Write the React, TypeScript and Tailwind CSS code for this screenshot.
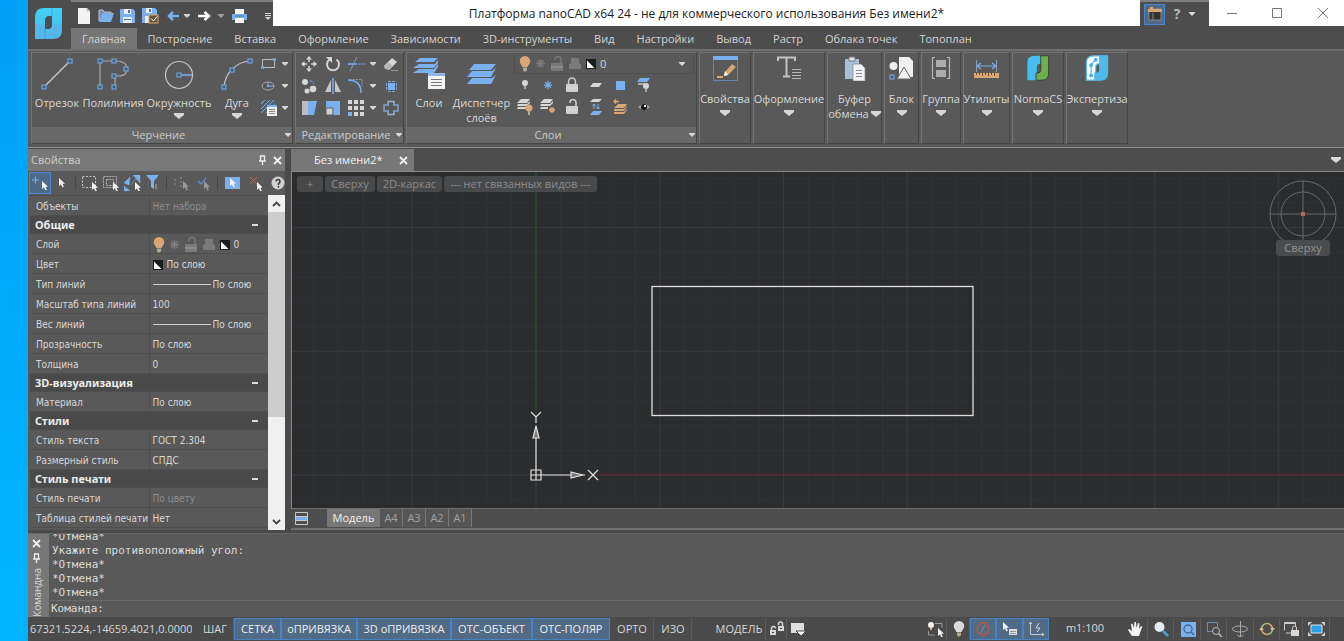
import React from "react";
import type { ReactNode } from "react";
import clsx from "clsx";

const BLUE = "#78b0f0";
const TAN = "#d9a676";
const LIGHT = "#d6d6d6";

type IconProps = { w?: number; h?: number; className?: string; children: ReactNode };

function Icon({ w = 16, h = 16, className, children }: IconProps) {
  return (
    <svg width={w} height={h} viewBox={`0 0 ${w} ${h}`} fill="none" className={clsx("shrink-0", className)} aria-hidden="true">
      {children}
    </svg>
  );
}

function Arrow({ big = false }: { big?: boolean }) {
  return big ? (
    <Icon w={10} h={6}><path d="M0 0h10v2L5 6 0 2z" fill={LIGHT} /></Icon>
  ) : (
    <Icon w={6} h={4}><path d="M0 0h6v1L3 4 0 1z" fill={LIGHT} /></Icon>
  );
}

function Node({ x, y }: { x: number; y: number }) {
  return <rect x={x - 2} y={y - 2} width="4" height="4" fill="#4b5a6b" stroke="#6ba3e0" strokeWidth="1.2" />;
}

function Cursor({ x, y, fill = "#f4f4f4" }: { x: number; y: number; fill?: string }) {
  return <path transform={`translate(${x} ${y})`} d="M0 0v8l2-1.8L3.4 9.4l1.4-.7L3.5 5.7H6z" fill={fill} />;
}

function Bulb({ fill = TAN }: { fill?: string }) {
  return (
    <Icon w={12} h={16}>
      <path d="M6 0a5.3 5.3 0 0 1 5.3 5.3C11.3 7.5 9 9 8.7 11H3.3C3 9 .7 7.5.7 5.3A5.3 5.3 0 0 1 6 0z" fill={fill} />
      <path d="M4 11.5h4v2.5L7 15.5H5L4 14z" fill="#b9a890" />
    </Icon>
  );
}

function Snow({ color, size = 12 }: { color: string; size?: number }) {
  return (
    <svg width={size} height={size} viewBox="0 0 12 12" aria-hidden="true" className="shrink-0">
      <path d="M6 1v10M1 6h10M2.5 2.5l7 7M9.5 2.5l-7 7" stroke={color} strokeWidth="1.5" />
    </svg>
  );
}

function Lock({ open = false, color = "#cfcfcf" }: { open?: boolean; color?: string }) {
  return (
    <Icon w={14} h={16}>
      <path d={open ? "M5 4V3.5a3 3 0 0 1 6 0V7" : "M3.5 7V4.5a3.5 3.5 0 0 1 7 0V7"} stroke={color} strokeWidth="1.5" />
      <rect x="1" y="7" width="12" height="8" rx="1" fill={color} />
      <path d="M1 11h12" stroke="#fff" strokeOpacity=".25" />
    </Icon>
  );
}

function PrinterDim() {
  return (
    <Icon w={14} h={14}>
      <path d="M3 6V1h8v5l2 1v5H1V7z" fill="#7a7a7a" />
    </Icon>
  );
}

function Swatch() {
  return (
    <Icon w={10} h={10}>
      <rect width="10" height="10" fill="#1b1b1b" />
      <path d="M1 1.5v7.5h7.5z" fill="#fff" />
    </Icon>
  );
}

function LayerState() {
  return (
    <>
      <Bulb />
      <Snow color="#7d7d7d" size={11} />
      <Lock open color="#7a7a7a" />
      <PrinterDim />
      <Swatch />
    </>
  );
}

/* ---------- title bar ---------- */

function QuickAccess() {
  return (
    <div className="flex w-[202px] items-center border-t-2 border-[#7d8080] bg-[#4d4d4d] pt-1 pl-1.5">
      <button aria-label="Создать" className="w-[21px]">
        <Icon w={14}><path d="M1 0h9l3 3v13H1z" fill="#f3f3f3" /><path d="M10 0v3h3" stroke="#aaa" /></Icon>
      </button>
      <button aria-label="Открыть" className="w-[22px]">
        <Icon><path d="M1 13V2h4l1 2h7v2" stroke="#b5c6d8" fill="#7d8fa5" /><path d="M4 5h12l-3 9H1z" fill={BLUE} /></Icon>
      </button>
      <button aria-label="Сохранить" className="w-[22px]">
        <Icon w={15}><path d="M0 1h13l2 2v12H0z" fill={BLUE} /><path d="M4 1h7v5H4zM3 9h9v6H3z" fill="#e9eef5" /><path d="M8 2h2v3H8zM4 11h7v1H4z" fill="#56748f" /></Icon>
      </button>
      <button aria-label="Сохранить как" className="w-[25px]">
        <Icon w={17}><path d="M0 0h13l2 2v13H0z" fill={BLUE} /><path d="M4 0h6v5H4zM3 8h8v7H3z" fill="#e9eef5" /><path d="M7 1h2v3H7z" fill="#56748f" /><rect x="7" y="7" width="9" height="8" fill="#6b5138" stroke={TAN} /><path d="M9 10.5l2.5 2.5L15 8.5" stroke="#fff" /></Icon>
      </button>
      <button aria-label="Отменить" className="w-[17px]">
        <Icon w={13} h={10}><path d="M12 5H2M6 1L2 5l4 4" stroke={BLUE} strokeWidth="2.5" /></Icon>
      </button>
      <button aria-label="История отмен" className="w-[14px]"><Arrow /></button>
      <button aria-label="Повторить" className="w-[20px]">
        <Icon w={13} h={10}><path d="M0 5h10M6.5 1L11 5 6.5 9" stroke="#fff" strokeWidth="2.5" /></Icon>
      </button>
      <button aria-label="История повторов" className="w-[13px] opacity-60"><Arrow /></button>
      <button aria-label="Печать" className="w-[34px]">
        <Icon w={17}><path d="M4 1h9v5H4z" fill="#f5f5f5" /><path d="M1 6h15v6H1z" fill={BLUE} /><path d="M4 10h9v5H4z" fill="#f5f5f5" /><path d="M4 8h9" stroke="#3f6fa8" /></Icon>
      </button>
      <button aria-label="Настройка панели">
        <Icon w={6} h={7}><path d="M0 .5h6M0 2.5h6" stroke={LIGHT} /><path d="M0 4h6L3 7z" fill={LIGHT} /></Icon>
      </button>
    </div>
  );
}

const tabs = ["Главная", "Построение", "Вставка", "Оформление", "Зависимости", "3D-инструменты", "Вид", "Настройки", "Вывод", "Растр", "Облака точек", "Топоплан"];

function Header() {
  return (
    <header className="flex h-[49px] shrink-0 bg-[#4d4d4d]">
      <div className="w-[43px] pt-2 pl-[7px]">
        <svg width="27" height="31" viewBox="0 0 27 31" aria-hidden="true">
          <defs>
            <linearGradient id="brand" x1="0" y1="0" x2="0" y2="1">
              <stop offset="0" stopColor="#45d0f7" /><stop offset=".5" stopColor="#43c6f2" /><stop offset=".52" stopColor="#52b8ea" /><stop offset="1" stopColor="#52b8ea" />
            </linearGradient>
          </defs>
          <path d="M0 30V9Q0 0 9 0H27V22Q27 31 18 31H0ZM17 8H14Q10 8 10 13V21H13Q17 21 17 17Z" fill="url(#brand)" fillRule="evenodd" />
          <path d="M10 20V31M17 9V0" stroke="#3a8fc0" strokeWidth=".7" />
        </svg>
      </div>
      <div className="flex min-w-0 flex-1 flex-col">
        <div className="flex h-[26px]">
          <QuickAccess />
          <h1 className="flex flex-1 items-center justify-center bg-white pt-0.5 text-[12px] text-[#1c1c1c]">
            Платформа nanoCAD x64 24 - не для коммерческого использования Без имени2*
          </h1>
          <div className="flex w-[69px] items-center border-t-2 border-[#7d8080] bg-[#4d4d4d] pl-1">
            <button aria-label="Интерфейс" className="flex h-[21px] w-[21px] items-center justify-center border border-[#4a87cc] bg-[#4f6a88]">
              <Icon w={14} h={14}><path d="M1 2h12v11H1z" fill="#333" stroke="#888" /><path d="M0 2h2V0h3v2h9v3H0z" fill={TAN} /><path d="M5 6v7" stroke="#888" /></Icon>
            </button>
            <button aria-label="Справка" className="w-6 text-[14px] font-bold text-[#b8b8b8]">?</button>
            <button aria-label="Меню справки"><Arrow /></button>
          </div>
          <div className="flex w-[135px] items-center bg-white pl-4">
            <button aria-label="Свернуть" className="w-[45px]"><Icon><path d="M2 8.5h10" stroke="#777" /></Icon></button>
            <button aria-label="Развернуть" className="w-[45px]"><Icon><path d="M2.5 3.5h9v9h-9z" stroke="#777" /></Icon></button>
            <button aria-label="Закрыть"><Icon><path d="M3 3l10 10M13 3L3 13" stroke="#777" /></Icon></button>
          </div>
        </div>
        <nav className="flex flex-1 pt-0.5">
          {tabs.map((tab, i) => (
            <button key={tab} className={clsx("px-[11px] whitespace-nowrap text-[#d2d2d2]", i === 0 && "bg-[#757575]")}>
              {tab}
            </button>
          ))}
        </nav>
      </div>
    </header>
  );
}

/* ---------- ribbon ---------- */

function Group({ title, className, children }: { title?: string; className: string; children: ReactNode }) {
  return (
    <section className={clsx("flex shrink-0 flex-col border border-[#454545] border-t-[#747474] border-l-[#747474]", className)}>
      <div className="flex min-h-0 flex-1">{children}</div>
      {title && (
        <div className="flex h-4 shrink-0 items-center bg-[#686868] pr-px text-[#c8c8c8]">
          <span className="flex-1 text-center">{title}</span>
          <Arrow />
        </div>
      )}
    </section>
  );
}

function BigButton({ icon, label, className, arrow }: { icon: ReactNode; label: string; className?: string; arrow?: boolean }) {
  return (
    <button className={clsx("flex flex-col items-center", className)}>
      <span className="flex h-[42px] items-center">{icon}</span>
      <span className="leading-[15px] whitespace-pre-line">{label}</span>
      {arrow && <span className="mt-[3px]"><Arrow big /></span>}
    </button>
  );
}

function DropIcon({ label, children }: { label: string; children: ReactNode }) {
  return (
    <button aria-label={label} className="flex h-[22px] items-center gap-[5px]">
      {children}
      <Arrow />
    </button>
  );
}

function DrawGroup() {
  return (
    <Group title="Черчение" className="w-[262px]">
      <BigButton className="w-[50px]" label="Отрезок" icon={
        <Icon w={32} h={32}><path d="M3 29L29 3" stroke="#c4c4c4" strokeWidth="1.5" /><Node x={3} y={29} /><Node x={29} y={3} /></Icon>
      } />
      <BigButton className="w-[62px]" label="Полилиния" icon={
        <Icon w={32} h={32}>
          <path d="M3 29V3h15c6 0 12 1 12 8s-6 7-12 7v11" stroke="#a9a9a9" strokeWidth="1.2" />
          <Node x={3} y={29} /><Node x={3} y={3} /><Node x={17} y={3} /><Node x={29} y={11} /><Node x={17} y={18} /><Node x={17} y={29} />
        </Icon>
      } />
      <BigButton className="w-[70px]" label="Окружность" arrow icon={
        <Icon w={32} h={32}><circle cx="16" cy="17" r="13.5" stroke="#c4c4c4" strokeWidth="1.2" /><path d="M16 17h13" stroke={BLUE} strokeWidth="1.5" /><Node x={16} y={17} /></Icon>
      } />
      <BigButton className="w-[46px]" label="Дуга" arrow icon={
        <Icon w={32} h={32}><path d="M3 29C4 15 15 4 29 3" stroke="#c4c4c4" strokeWidth="1.2" /><Node x={3} y={29} /><Node x={11} y={12} /><Node x={29} y={3} /></Icon>
      } />
      <div className="flex flex-col">
        <DropIcon label="Прямоугольник">
          <Icon w={17}><path d="M2.5 3.5h12v8h-12z" stroke="#bbb" /><path d="M1 10h3v3H1zM13 2h3v3h-3z" fill="#6ba3e0" /></Icon>
        </DropIcon>
        <DropIcon label="Эллипс">
          <Icon w={17}><ellipse cx="8" cy="8" rx="6" ry="4" stroke="#aaa" /><path d="M8 4v4h6" stroke={BLUE} /><path d="M7 7h2v2H7z" fill={BLUE} /></Icon>
        </DropIcon>
        <DropIcon label="Штриховка">
          <Icon w={17} h={18}>
            <path d="M1 1h14v13H1z" fill="#53606e" /><path d="M1 5l4-4M1 10l9-9M1 14L14 1M6 14l9-9" stroke="#8fa6bf" />
            <path d="M7 6h10v11H7z" fill="#efefef" /><path d="M7 6h10v2H7z" fill={BLUE} /><path d="M9 10.5h6M9 12.5h6M9 14.5h6" stroke="#888" />
          </Icon>
        </DropIcon>
      </div>
    </Group>
  );
}

const cell = "flex h-[22px] items-center justify-center";

function EditGroup() {
  return (
    <Group title="Редактирование" className="w-[109px]">
      <div className="grid h-[66px] grid-cols-[26px_22px_36px_22px]">
        <button aria-label="Перенести" className={cell}>
          <Icon><path d="M8 3v3M8 10v3M3 8h3M10 8h3" stroke={LIGHT} strokeWidth="1.5" /><path d="M8 0l3 3.5H5zM8 16l3-3.5H5zM0 8l3.5-3v6zM16 8l-3.5-3v6z" fill={LIGHT} /></Icon>
        </button>
        <button aria-label="Повернуть" className={cell}>
          <Icon><path d="M11.5 3.5a6 6 0 1 1-7 0" stroke={LIGHT} strokeWidth="2" /><path d="M1 1h6v6z" fill={LIGHT} /></Icon>
        </button>
        <DropIcon label="Обрезать">
          <Icon w={17} className="ml-1"><path d="M0 8h9" stroke={BLUE} strokeWidth="1.5" /><path d="M10 8h7" stroke={BLUE} strokeDasharray="2 1" /><path d="M2 15L9 1" stroke="#8b9cb0" /></Icon>
        </DropIcon>
        <button aria-label="Стереть" className={cell}>
          <Icon><path d="M1 10l8-8 5 4-8 8z" fill="#d9d9d9" /><path d="M1 10l4-4 5 4-4 4-4-1z" fill="#b4b4b4" /><path d="M8 14.5h7" stroke="#999" /></Icon>
        </button>
        <button aria-label="Копировать" className={cell}>
          <Icon><circle cx="4" cy="4" r="3" fill={LIGHT} /><circle cx="6" cy="13" r="2.5" fill={LIGHT} /><circle cx="12" cy="11" r="3.3" fill={LIGHT} /><path d="M9 3c3 0 4 1 4 4" stroke={BLUE} strokeDasharray="2 1" /></Icon>
        </button>
        <button aria-label="Зеркало" className={cell}>
          <Icon><path d="M6 2v12H0z" fill="#c6c6c6" /><path d="M10 2v12h6z" fill="#c6c6c6" /><path d="M8 0v16" stroke={BLUE} strokeWidth="1.5" /></Icon>
        </button>
        <DropIcon label="Сопряжение">
          <Icon w={17} className="ml-1"><path d="M0 2c9 0 13 4 13 13" stroke={BLUE} strokeWidth="1.5" /><path d="M5 1.5h9v7" stroke="#999" strokeDasharray="2 1" /></Icon>
        </DropIcon>
        <button aria-label="Подобие" className={cell}>
          <Icon><path d="M5 5h7v7H5z" fill={BLUE} /><path d="M5 3.5h7M5 13.5h7M3.5 5v7M13.5 5v7" stroke="#7fa3cb" strokeDasharray="3 1" /></Icon>
        </button>
        <button aria-label="Растянуть" className={cell}>
          <Icon><path d="M1 1h6v14H1z" fill="#bdbdbd" /><path d="M7 1h9l-3 14H7z" fill={BLUE} /></Icon>
        </button>
        <button aria-label="Масштаб" className={cell}>
          <Icon><path d="M1 1h14v14H1z" fill={BLUE} /><path d="M1 8h7v7H1z" fill="#d0d0d0" stroke="#5c5c5c" /></Icon>
        </button>
        <DropIcon label="Массив">
          <Icon w={17} className="ml-1">
            <path d="M0 0h4v4H0zM6 0h4v4H6zM12 0h4v4h-4zM0 6h4v4H0zM6 6h4v4H6zM12 6h4v4h-4zM6 12h4v4H6zM12 12h4v4h-4z" fill={LIGHT} />
            <path d="M0 12h4v4H0z" fill={BLUE} />
          </Icon>
        </DropIcon>
        <button aria-label="Разрыв" className={cell}>
          <Icon><path d="M5 5V1.500h6V5M5 11v3.500h6V11" stroke="#9ab0c8" strokeWidth="1.5" /><path d="M6 5H1v6h5M10 5h5v6h-5" stroke="#7fa3cb" strokeWidth="1.5" /></Icon>
        </button>
      </div>
    </Group>
  );
}

function LayerTools() {
  return (
    <div className="grid grid-cols-[22px_24px_24px_24px_24px_24px]">
      <button aria-label="Включить слой" className={cell}><Icon w={8} h={10}><circle cx="4" cy="3" r="3" fill={LIGHT} /><path d="M3 6h2v3H3z" fill="#aaa" /></Icon></button>
      <button aria-label="Разморозить слой" className={cell}><Snow color={BLUE} size={10} /></button>
      <button aria-label="Блокировать слой" className={cell}><Lock /></button>
      <button aria-label="Слой объекта" className={cell}><Icon w={12} h={4}><path d="M3 0h9L9 4H0z" fill={LIGHT} /></Icon></button>
      <button aria-label="Изолировать слой" className={cell}><Icon w={9} h={9}><path d="M0 0h9v9H0z" fill={BLUE} /></Icon></button>
      <button aria-label="Отключить слой" className={cell}><Icon w={14}><path d="M3 1h10l-3 4H0z" fill={BLUE} /><path d="M1 7h8" stroke="#aaa" strokeWidth="2" /><circle cx="9" cy="9" r="3" fill={LIGHT} /><path d="M8 12h2v3H8z" fill="#aaa" /></Icon></button>
      <button aria-label="Показать слои" className={cell}><Icon><path d="M4 0h9l-3 4H0zM1 5h9l3-3v2L10 7H0zM1 8h9v2H0z" fill={LIGHT} /><circle cx="12" cy="9" r="3.5" fill={TAN} /><path d="M11 12h2v4h-2z" fill="#b9a890" /></Icon></button>
      <button aria-label="Заморозить слои" className={cell}><Icon><path d="M4 0h9l-3 4H0zM1 5h9l3-3v2L10 7H0zM1 8h7v2H0z" fill={LIGHT} /><path d="M12 8v6M9 11h6M10 9l4 4M14 9l-4 4" stroke={TAN} strokeWidth="1.3" /></Icon></button>
      <button aria-label="Разблокировать слой" className={cell}><Lock open /></button>
      <button aria-label="Объединить слои" className={cell}><Icon w={12}><path d="M3 0h9L9 3H0z" fill={LIGHT} /><path d="M4 5v5M8 10V5M2.5 7L4 5l1.5 2M6.5 8L8 10l1.5-2" stroke={BLUE} /><path d="M3 12h9l-3 4H0z" fill={BLUE} /></Icon></button>
      <button aria-label="Предыдущее состояние" className={cell}><Icon w={14}><path d="M6 2.5H1M3 .5L1 2.500l2 2" stroke={TAN} strokeWidth="1.5" /><path d="M5 5h9l-3 4H1zM1 10h10l3-3v1l-3 4H1zM1 13h10l3-3v1l-3 4H1z" fill={TAN} /></Icon></button>
      <button aria-label="Обход слоёв" className={cell}><Icon w={12} h={8}><path d="M0 4q6-6 12 0-6 6-12 0z" fill="#9a9a9a" /><circle cx="6" cy="4" r="3" fill="#161616" /><path d="M6 2h2v2H6z" fill="#fff" /></Icon></button>
    </div>
  );
}

function LayerGroup() {
  return (
    <Group title="Слои" className="w-[291px]">
      <BigButton className="w-[44px]" label="Слои" icon={
        <Icon w={32} h={32}>
          <path d="M7 0h18l-4 4H2zM6 6h16l3-4v3l-4 5H0zM6 11h15l4-5v3l-4 6H0z" fill={BLUE} />
          <path d="M15 15h17v16H15z" fill="#f4f4f4" /><path d="M15 15h17v3H15z" fill="#8fb8e8" /><path d="M18 21.5h11M18 24.5h11M18 27.5h11" stroke="#777" />
        </Icon>
      } />
      <BigButton className="w-[61px]" label={"Диспетчер\nслоёв"} icon={
        <Icon w={30} h={20}><path d="M7 0h22l-5 6H2zM5 7h20l4-3-5 9H0zM5 14h20l4-3-5 9H0z" fill={BLUE} /></Icon>
      } />
      <div className="flex flex-1 flex-col pr-0.5 pl-0.5">
        <div className="flex h-[21px] items-center gap-1 border border-[#4f4f4f] pl-1 text-[#d8d8d8]">
          <LayerState />
          <select aria-label="Текущий слой" className="flex-1 appearance-none bg-transparent outline-none"><option>0</option></select>
          <span className="pr-2"><Arrow /></span>
        </div>
        <LayerTools />
      </div>
    </Group>
  );
}

function PaletteGroup({ icon, label, className }: { icon: ReactNode; label: string; className: string }) {
  return (
    <Group className={className}>
      <button className="flex min-w-0 flex-1 flex-col items-center whitespace-nowrap">
        <span className="flex h-[38px] items-center pb-2">{icon}</span>
        <span className="leading-[15px]">{label}</span>
        <span className="mt-1"><Arrow big /></span>
      </button>
    </Group>
  );
}

function Ribbon() {
  return (
    <div className="flex h-[99px] shrink-0 gap-0.5 border-t-2 border-b border-t-[#6e6e6e] border-b-[#909090] bg-[#595959] pt-px pb-[3px] pl-[3px] text-[#d8d8d8]">
      <DrawGroup />
      <EditGroup />
      <LayerGroup />
      <PaletteGroup className="w-[52px]" label="Свойства" icon={
        <Icon w={25} h={25}><rect x=".5" y=".5" width="24" height="24" stroke="#6683ad" /><path d="M0 0h25v4H0z" fill={BLUE} /><path d="M12 16l7-8 4 3-8 8-4 1z" fill={TAN} /><path d="M12 15l3 4-4 1z" fill="#fff" /><path d="M4 21h6" stroke={TAN} strokeWidth="2" /></Icon>
      } />
      <PaletteGroup className="w-[72px]" label="Оформление" icon={
        <Icon w={24} h={25}><path d="M1 5V1.500h17V5M9.500 2v18M6 20.500h7" stroke="#c4c4c4" strokeWidth="2" /><path d="M15 13.500h9M15 16.500h9M15 19.500h9M15 22.500h9" stroke="#b8b8b8" /></Icon>
      } />
      <Group className="w-[55px]">
        <button className="flex min-w-0 flex-1 flex-col items-center whitespace-nowrap">
          <span className="flex h-[38px] items-center pb-2">
            <Icon w={22} h={25}>
              <path d="M1 3h14v20H1z" fill="#a9c0d8" /><path d="M5 1h6v4H5z" fill="#e8e8e8" stroke="#777" /><path d="M9 8h8l4 4v13H9z" fill="#f4f4f4" stroke="#888" strokeWidth=".7" /><path d="M12 14.500h6M12 17.500h6M12 20.500h6" stroke="#888" />
            </Icon>
          </span>
          <span className="leading-[15px]">Буфер</span>
          <span className="flex items-center gap-0.5 leading-[15px]">обмена<Arrow big /></span>
        </button>
      </Group>
      <PaletteGroup className="w-[35px]" label="Блок" icon={
        <Icon w={25} h={25}><path d="M10 1h10l4 4v16H10z" fill="#f1f1f1" /><circle cx="4.500" cy="10" r="4" fill="#ececec" /><path d="M15 11l7 12H8z" fill="#f1f1f1" stroke="#666" /><Node x={3} y={21} /></Icon>
      } />
      <PaletteGroup className="w-[40px]" label="Группа" icon={
        <Icon w={20} h={25}><path d="M4 1.500H1.500v21H4M16 1.500h2.500v21H16" stroke="#b8b8b8" strokeWidth="1.2" /><path d="M5 4h10v7H5zM5 14h10v7H5z" fill="#adadad" /></Icon>
      } />
      <PaletteGroup className="w-[47px]" label="Утилиты" icon={
        <Icon w={25} h={25}><path d="M2.500 4v12M22.500 4v12" stroke="#8a9cb0" /><path d="M3 10h19M7 7l-4 3 4 3M18 7l4 3-4 3" stroke={BLUE} strokeWidth="1.2" /><path d="M0 17h25v5H0z" fill={TAN} /><path d="M2.500 17v2M5.500 17v2M8.500 17v3M11.500 17v2M14.500 17v3M17.500 17v2M20.500 17v3" stroke="#6b4a2a" /></Icon>
      } />
      <PaletteGroup className="w-[52px]" label="NormaCS" icon={
        <svg width="24" height="26" viewBox="-1 -1 29 33" strokeWidth="1" stroke="#333" aria-hidden="true">
          <path d="M0 31V9Q0 0 9 0H17V10Q12 10 12 14V22H11V31Z" fill="#42bff0" stroke="none" />
          <path d="M17 0H27V22Q27 31 18 31H11V22H13Q17 22 17 18Z" fill="#6fb04e" />
        </svg>
      } />
      <PaletteGroup className="w-[62px]" label="Экспертиза" icon={
        <svg width="24" height="26" viewBox="-1 -1 29 33" strokeWidth="1.5" stroke="#4fbbea" aria-hidden="true">
          <path d="M0 31V9Q0 0 9 0H17V10Q12 10 12 14V22H11V31Z" fill="#fff" />
          <path d="M17 0H27V22Q27 31 18 31H11V22H13Q17 22 17 18Z" fill="#4fbbea" />
          <path d="M12 5L6 11v15" fill="none" />
          <circle cx="12" cy="5" r="1.800" fill="#3a9ad8" /><circle cx="6" cy="12" r="1.800" fill="#3a9ad8" /><circle cx="6" cy="25" r="1.800" fill="#3a9ad8" />
        </svg>
      } />
    </div>
  );
}

/* ---------- properties panel ---------- */

function Pin() {
  return <Icon w={9} h={10}><path d="M2.500 1v5M6.500 1v5M2 1h5M1 6h7M4.500 6v4" stroke="#f0f0f0" strokeWidth="1.3" /></Icon>;
}

function Close() {
  return <Icon w={9} h={9}><path d="M1 1l7 7M8 1L1 8" stroke="#f0f0f0" strokeWidth="1.8" /></Icon>;
}

const lineByLayer = (
  <span className="flex items-center gap-0.5"><span className="h-px w-[58px] bg-[#d0d0d0]" />По слою</span>
);

type Row = { name: string; value?: ReactNode; dim?: boolean };

const rows: Row[] = [
  { name: "Объекты", value: "Нет набора", dim: true },
  { name: "Общие" },
  { name: "Слой", value: <span className="flex items-center gap-1"><LayerState />0</span> },
  { name: "Цвет", value: <span className="flex items-center gap-1"><Swatch />По слою</span> },
  { name: "Тип линий", value: lineByLayer },
  { name: "Масштаб типа линий", value: "100" },
  { name: "Вес линий", value: lineByLayer },
  { name: "Прозрачность", value: "По слою" },
  { name: "Толщина", value: "0" },
  { name: "3D-визуализация" },
  { name: "Материал", value: "По слою" },
  { name: "Стили" },
  { name: "Стиль текста", value: "ГОСТ 2.304" },
  { name: "Размерный стиль", value: "СПДС" },
  { name: "Стиль печати" },
  { name: "Стиль печати", value: "По цвету", dim: true },
  { name: "Таблица стилей печати", value: "Нет" },
];

function SelectionTools() {
  return (
    <div className="flex h-6 shrink-0 items-center overflow-hidden pl-px">
      <button aria-label="Добавить к набору" className="flex h-[22px] w-[23px] items-center justify-center border border-[#4a87cc] bg-[#4f6a88]">
        <Icon w={16}><path d="M0 5h7M3.500 1.500v7" stroke={BLUE} /><Cursor x={10} y={6} /></Icon>
      </button>
      <button aria-label="Выбор" className="flex w-[26px] justify-center"><Icon w={10}><Cursor x={1} y={3} /></Icon></button>
      <i className="mr-[5px] h-3.5 w-px bg-[#484848]" />
      <button aria-label="Рамка" className="w-[23px]"><Icon w={17}><path d="M1.500 1.500h13v11h-13z" stroke="#c4c4c4" strokeDasharray="2 1.5" /><Cursor x={11} y={7} /></Icon></button>
      <button aria-label="Секущая рамка" className="w-[23px]"><Icon w={17}><path d="M1.500 1.500h13v11h-13zM4.500 4.500h7v6h-7z" stroke="#b4b4b4" strokeDasharray="2 1" /><Cursor x={11} y={7} /></Icon></button>
      <button aria-label="Инвертировать" className="w-[23px]"><Icon w={17}><path d="M0 8l6-6-1 8zM9 0h7v8zM0 11l6 5H0zM7 10l5-7" fill={BLUE} stroke={BLUE} strokeWidth=".5" /><Cursor x={11} y={7} /></Icon></button>
      <button aria-label="Фильтр" className="w-[22px]"><Icon w={14}><path d="M0 0h13L8 6v8L5 12V6z" fill={BLUE} /><path d="M10 9v5" stroke={TAN} /></Icon></button>
      <i className="mr-[7px] h-3.5 w-px bg-[#484848]" />
      <button aria-label="Подобные" className="w-[25px]"><Icon w={16}><path d="M1 4v8M7 2v10" stroke="#7c94b0" strokeDasharray="2 2" /><Cursor x={9} y={6} fill="#999" /></Icon></button>
      <button aria-label="Применить" className="w-[21px]"><Icon w={14}><path d="M1 6l3 3 5-6" stroke="#5c8cc4" strokeWidth="1.5" /><Cursor x={7} y={6} fill="#999" /></Icon></button>
      <i className="mr-[7px] h-3.5 w-px bg-[#484848]" />
      <button aria-label="Режим выбора" className="w-[24px] shrink-0"><Icon w={15} h={14}><path d="M0 1h15v12H0z" fill={BLUE} /><Cursor x={5} y={2} /></Icon></button>
      <button aria-label="Сбросить" className="w-[22px] shrink-0"><Icon w={13}><path d="M1 2l7 7M8 2L1 9" stroke="#b06a50" /><Cursor x={8} y={7} /></Icon></button>
      <button aria-label="Помощь" className="shrink-0"><Icon w={14} h={14}><circle cx="7" cy="7" r="6.500" fill="#d0d0d0" /><path d="M5 5.500a2 2 0 1 1 2.500 2V9M7.500 10v1.500" stroke="#333" strokeWidth="1.5" /></Icon></button>
    </div>
  );
}

function PropertiesPanel() {
  return (
    <aside className="flex w-[257px] shrink-0 flex-col overflow-hidden bg-[#595959]">
      <div className="flex h-[22px] shrink-0 items-center gap-1.5 bg-[#787878] pr-[3px] pl-[3px]">
        <h2 className="flex-1 text-[#cfcfcf]">Свойства</h2>
        <button aria-label="Закрепить"><Pin /></button>
        <button aria-label="Закрыть панель"><Close /></button>
      </div>
      <SelectionTools />
      <div className="flex min-h-0 flex-1 pl-0.5">
        <div className="min-w-0 flex-1 overflow-hidden">
          <table className="w-full table-fixed border-collapse font-['DejaVu_Sans_Condensed','Noto_Sans',sans-serif] text-[10px] text-[#d8d8d8]">
            <tbody>
              {rows.map((row, i) =>
                row.value === undefined ? (
                  <tr key={i} className="h-[18px] bg-[#4a4a4a]">
                    <th colSpan={2} className="p-0 pr-2.5 pl-[5px] text-left font-['Noto_Sans',sans-serif] text-[11px]">
                      <span className="flex items-center justify-between font-bold text-[#ececec]">
                        {row.name}
                        <span className="h-0.5 w-1.5 bg-[#dcdcdc]" />
                      </span>
                    </th>
                  </tr>
                ) : (
                  <tr key={i} className="h-5 border-y border-[#4e4e4e]">
                    <th className="w-[119px] border-r border-[#4e4e4e] p-0 pt-0.5 pl-1.5 text-left font-normal whitespace-nowrap">{row.name}</th>
                    <td className={clsx("p-0 pt-0.5 pl-[3px] whitespace-nowrap", row.dim && "text-[#8e8e8e]")}>{row.value}</td>
                  </tr>
                )
              )}
            </tbody>
          </table>
        </div>
        <div className="flex w-[17px] shrink-0 flex-col bg-[#f0f0f0]">
          <button aria-label="Вверх" className="flex h-[17px] items-center justify-center"><Icon w={9} h={6}><path d="M1 5l3.500-3.500L8 5" stroke="#444" strokeWidth="1.8" /></Icon></button>
          <div className="flex-1"><div className="h-[68%] bg-[#cdcdcd]" /></div>
          <button aria-label="Вниз" className="flex h-[17px] items-center justify-center"><Icon w={9} h={6}><path d="M1 1l3.500 3.500L8 1" stroke="#444" strokeWidth="1.8" /></Icon></button>
        </div>
      </div>
    </aside>
  );
}

/* ---------- drawing area ---------- */

function Drawing() {
  return (
    <svg className="absolute inset-0 h-full w-full" fill="none" aria-label="Чертёж">
      <defs>
        <pattern id="minor" x="-4" y="-19" width="24.75" height="24.75" patternUnits="userSpaceOnUse">
          <path d="M.5 0v24.75M0 .5h24.75" stroke="#303135" />
        </pattern>
        <pattern id="major" x="-4" y="55" width="123.75" height="123.75" patternUnits="userSpaceOnUse">
          <path d="M.5 0v123.75M0 .5h123.75" stroke="#37383b" />
        </pattern>
      </defs>
      <rect width="100%" height="100%" fill="url(#minor)" />
      <rect width="100%" height="100%" fill="url(#major)" />
      <path d="M244 0v240" stroke="#27462a" strokeWidth="1.5" />
      <path d="M307 302.5H3000" stroke="#5e2427" />
      <rect x="360" y="114.5" width="321" height="129" stroke="#dedede" strokeWidth="1.3" />
      <g stroke="#e2e2e2" strokeWidth="1.2">
        <path d="M239 298h10v10h-10zM239 303h54M244 308v-54" />
        <path d="M279 300l12 3-12 3zM241 266l3-12 3 12z" fill="#77797a" />
        <path d="M296 298l10 10M306 298l-10 10M239 240l5 5 5-5M244 245v6" />
      </g>
    </svg>
  );
}

function Chip({ children }: { children: ReactNode }) {
  return <button className="h-4 rounded-[3px] bg-[#48494a] px-1.5 leading-4 text-[#8b8b8b]">{children}</button>;
}

function Workspace() {
  return (
    <main className="flex min-w-0 flex-1 flex-col">
      <div className="flex h-[22px] shrink-0 justify-between bg-[#4d4d4d]">
        <div className="flex w-[123px] items-center justify-between bg-[#777] pr-1.5 pl-[23px] text-[#f0f0f0]">
          Без имени2*
          <button aria-label="Закрыть документ"><Close /></button>
        </div>
        <button aria-label="Список документов" className="pr-[3px]"><Arrow big /></button>
      </div>
      <div className="relative min-h-0 flex-1 overflow-hidden border-t border-l border-[#8a8a8a] bg-[#2b2c2e]">
        <Drawing />
        <div className="relative flex gap-0.5 pt-1 pl-[5px]">
          <Chip><span className="px-1">+</span></Chip>
          <Chip>Сверху</Chip>
          <Chip>2D-каркас</Chip>
          <Chip>--- нет связанных видов ---</Chip>
        </div>
        <div className="absolute top-2 right-[7px] flex w-[68px] flex-col items-center">
          <Icon w={68} h={68}>
            <circle cx="34" cy="34" r="33" stroke="#68696b" /><circle cx="34" cy="34" r="22" stroke="#68696b" />
            <path d="M1 34h66M34 1v66" stroke="#68696b" /><path d="M32 32h4v4h-4z" fill="#b06a64" />
          </Icon>
          <button className="-mt-2 h-4 rounded-[3px] bg-[#4a4b4c] px-2 leading-4 text-[#939393]">Сверху</button>
        </div>
      </div>
      <div className="flex h-[22px] shrink-0 border-t border-b-2 border-[#707070] bg-[#4d4d4d] text-[#a2a2a2]">
        <button aria-label="Список листов" className="flex w-[36px] items-center pl-1">
          <Icon w={13} h={13}><path d="M.5.5h12v12H.5zM.5 4.500h12M.5 8.500h12" stroke="#c8c8c8" /><path d="M1 5h11v3H1z" fill={BLUE} /></Icon>
        </button>
        <button className="h-[18px] w-[53px] bg-[#777] text-[#f0f0f0]">Модель</button>
        {["A4", "A3", "A2", "A1"].map((s) => (
          <button key={s} className="h-[18px] w-[23px] border-r border-[#777] bg-[#565656]">{s}</button>
        ))}
      </div>
    </main>
  );
}

/* ---------- command line ---------- */

function CommandLine() {
  return (
    <div className="flex h-[84px] shrink-0 border-t border-[#666] bg-[#595959] text-[#dcdcdc]">
      <div className="flex w-[21px] shrink-0 flex-col items-center gap-[5px] bg-[#777] pt-[5px] pr-1">
        <button aria-label="Закрыть командную строку"><Close /></button>
        <button aria-label="Закрепить командную строку"><Pin /></button>
        <span className="text-[10px] leading-3 whitespace-nowrap text-[#d4d4d4] [writing-mode:sideways-lr]">Командна</span>
      </div>
      <div className="flex min-w-0 flex-1 flex-col font-['DejaVu_Sans_Mono',monospace] text-[11px]">
        <div className="flex h-[66px] flex-col justify-end overflow-hidden pl-[3px] leading-[14px]">
          <p>*Отмена*</p>
          <p>Укажите противоположный угол:</p>
          <p>*Отмена*</p>
          <p>*Отмена*</p>
          <p>*Отмена*</p>
        </div>
        <div className="flex flex-1 items-center border-t border-[#6a6a6a] pl-0.5">
          <label htmlFor="command">Команда:</label>
          <input id="command" className="min-w-0 flex-1 bg-transparent pl-1 outline-none" />
        </div>
      </div>
    </div>
  );
}

/* ---------- status bar ---------- */

function Toggle({ label, on, className }: { label: string; on?: boolean; className: string }) {
  return (
    <button
      aria-pressed={!!on}
      className={clsx("h-[22px] border whitespace-nowrap", on ? "border-[#4a83c4] bg-[#516a86] text-[#f0f0f0]" : "border-transparent border-r-[#5c5c5c]", className)}
    >
      {label}
    </button>
  );
}

function Tool({ label, on, className, children }: { label: string; on?: boolean; className: string; children: ReactNode }) {
  return (
    <button aria-label={label} className={clsx("flex h-[22px] items-center justify-center border", on ? "border-[#4a83c4] bg-[#516a86]" : "border-transparent border-r-[#5c5c5c]", className)}>
      {children}
    </button>
  );
}

function StatusBar() {
  return (
    <footer className="flex h-6 shrink-0 items-center bg-[#4b4b4b] pl-0.5 text-[#d8d8d8]">
      <span className="w-[162px] overflow-hidden whitespace-nowrap">67321.5224,-14659.4021,0.0000</span>
      <Toggle className="ml-1 w-[38px]" label="ШАГ" />
      <Toggle className="w-[47px]" on label="СЕТКА" />
      <Toggle className="w-[76px]" on label="оПРИВЯЗКА" />
      <Toggle className="w-[94px]" on label="3D оПРИВЯЗКА" />
      <Toggle className="w-[81px]" on label="ОТС-ОБЪЕКТ" />
      <Toggle className="w-[78px]" on label="ОТС-ПОЛЯР" />
      <Toggle className="w-[44px]" label="ОРТО" />
      <Toggle className="w-[38px]" label="ИЗО" />
      <Toggle className="ml-5 w-[54px]" label="МОДЕЛЬ" />
      <Tool label="Блокировка масштаба" className="w-[21px]">
        <Icon><path d="M2.500 9V7.500a2 2 0 0 1 4 0M9.500 4V3a2 2 0 0 1 4 0v3" stroke={LIGHT} strokeWidth="1.5" /><path d="M1 9h6v5H1zM9 5h6v5H9z" fill={LIGHT} /><path d="M3 11h2v1H3zM11 7h2v1h-2z" fill="#444" /></Icon>
      </Tool>
      <Tool label="Аннотации" className="w-[22px] border-r-transparent">
        <Icon><path d="M1 2h13v10H1z" fill="#dedede" /><path d="M6 10h10l-5 5z" fill="#fff" stroke="#444" /></Icon>
      </Tool>
      <div className="flex-1" />
      <Tool label="Выбор объектов" className="w-[23px]">
        <Icon w={18}><circle cx="4" cy="4" r="3" fill="#f0f0f0" /><path d="M3 7h2v2H3z" fill={TAN} /><path d="M8 2.500h7v4M1.500 10v4h6" stroke="#999" /><Cursor x={11} y={7} /></Icon>
      </Tool>
      <Tool label="Подсветка" className="w-[23px]"><Bulb fill="#dadada" /></Tool>
      <Tool on label="Привязка" className="w-[26px]">
        <Icon><circle cx="8" cy="8" r="6" stroke="#9a5f50" strokeWidth="2" /><path d="M4 4l8 8" stroke="#9a5f50" /><path d="M10 4l-4 8" stroke="#8a8a8a" /></Icon>
      </Tool>
      <Tool on label="Подсказка" className="w-[27px]">
        <Icon><Cursor x={1} y={1} /><path d="M7 8h8v6H7z" fill="#e0e0e0" /><path d="M8 10.500h6M8 12.500h6" stroke="#999" /></Icon>
      </Tool>
      <Tool on label="Динамический ввод" className="w-[26px]">
        <Icon><path d="M2.500 1v12.500H16M1 3l1.500-2L4 3M14 12l2 1.500-2 1.500" stroke="#c8c8c8" /><path d="M11 2l-3 5h4l-3 4" stroke="#d8d8d8" /></Icon>
      </Tool>
      <button className="w-[72px] pb-0.5">m1:100</button>
      <Tool label="Панорамирование" className="w-[27px]">
        <Icon><path d="M5 15L1 9l1-1 3 2-1-7 1.500-.3L7 7 7.500 1H9l.5 6L11 2l1.500.4L12 8l2-3 1.300.6L13 12l-1 3z" fill="#f2f2f2" /></Icon>
      </Tool>
      <Tool label="Масштаб" className="w-[26px]">
        <Icon><path d="M10 10l5 5" stroke="#4aa0e0" strokeWidth="2.5" /><circle cx="6.500" cy="6" r="5" fill="#e4ecf2" /></Icon>
      </Tool>
      <Tool label="Показать всё" className="w-[27px]">
        <Icon><path d="M1 1h15v15H1z" fill={BLUE} /><circle cx="8" cy="8" r="4" stroke="#44688f" strokeWidth="1.3" /><path d="M11 11l3 3" stroke="#44688f" strokeWidth="1.5" /></Icon>
      </Tool>
      <Tool label="Показать рамкой" className="w-[26px]">
        <Icon w={17}><path d="M1.500 10.500v-9h10V6M1 10.500h5" stroke="#648fc0" /><circle cx="10" cy="10" r="3.500" stroke="#bbb" /><path d="M12.500 12.500L16 16" stroke="#bbb" strokeWidth="1.5" /></Icon>
      </Tool>
      <Tool label="Орбита" className="w-[27px]">
        <Icon w={17}><ellipse cx="8" cy="8" rx="7.500" ry="3" stroke="#a8a8a8" /><path d="M8.500 0v16M5 14l3.500 2 3-2" stroke="#a8a8a8" /></Icon>
      </Tool>
      <Tool label="Регенерация" className="w-[26px]">
        <Icon><path d="M2.500 8a5.500 5.500 0 0 1 5.500-5.500M8 13.500A5.500 5.500 0 0 0 13.500 8" stroke="#a0c080" strokeWidth="1.5" /><path d="M8 2.500A5.500 5.500 0 0 1 13.500 8M8 13.500A5.500 5.500 0 0 1 2.500 8" stroke={TAN} strokeWidth="1.5" /><path d="M11 7h5l-2.500 3zM0 9h5L2.500 6z" fill="#d8c088" /></Icon>
      </Tool>
      <Tool label="Блокировка видов" className="w-[23px]">
        <Icon w={17}><path d="M1.500 9.500v-8h11V5M1 2.500h12M3 12h5" stroke="#ccc" /><path d="M9.500 9V7a2 2 0 0 1 4 0v2" stroke="#ccc" /><path d="M8 9h8v6H8z" fill="#d8d8d8" /></Icon>
      </Tool>
      <Tool label="Полный экран" className="mr-3.5 w-[27px]">
        <Icon w={17}><path d="M3 4h11v8H3z" fill="#28a0ec" stroke="#e0e0e0" /><path d="M0 1h4L0 5zM17 1h-4l4 4zM0 15h4l-4-4zM17 15h-4l4-4z" fill="#d0d0d0" /></Icon>
      </Tool>
    </footer>
  );
}

export default function App() {
  return (
    <div className="flex h-screen overflow-hidden bg-linear-to-b from-[#00a1f8] to-[#00b5ff] font-['Open_Sans','Noto_Sans',sans-serif] text-[11px] leading-4">
      <div className="w-7 shrink-0" />
      <div className="flex min-w-0 flex-1 flex-col bg-[#4a4a4a]">
        <Header />
        <Ribbon />
        <div className="flex min-h-0 flex-1 gap-1.5 pt-px pb-[3px]">
          <PropertiesPanel />
          <Workspace />
        </div>
        <CommandLine />
        <StatusBar />
      </div>
    </div>
  );
}
